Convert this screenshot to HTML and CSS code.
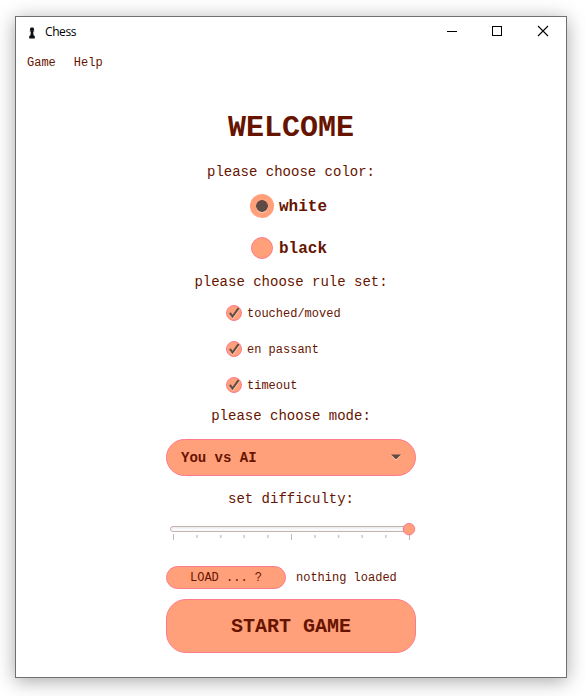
FILE: index.html
```html
<!DOCTYPE html>
<html lang="en">
<head>
<meta charset="utf-8">
<title>Chess</title>
<link rel="stylesheet" href="styles.css">
</head>
<body>
<div class="window">
  <header class="titlebar">
    <svg class="pawn" width="8" height="12" viewBox="0 0 8 12"><path d="M3 .5h2l1 1v1.200l-.8.8h1V4.500H5.200L5.500 8l1.300 1.300V11.500H1.200V9.300L2.500 8l.3-3.500H1.800V3.500h1L2 2.700V1.500z" fill="#111"/></svg>
    <span class="title">Chess</span>
    <div class="controls">
      <svg width="46" height="30"><path d="M18 14.5h10" stroke="#000"/></svg>
      <svg width="46" height="30"><rect x="17.5" y="9.5" width="9" height="9" fill="none" stroke="#000"/></svg>
      <svg width="45" height="30"><path d="M17 9l10 10M27 9L17 19" stroke="#000" stroke-width="1.1"/></svg>
    </div>
  </header>
  <nav class="menu"><span>Game</span><span>Help</span></nav>
  <main class="content">
    <h1>WELCOME</h1>
    <p class="label">please choose color:</p>
    <div class="radios">
      <label class="radio"><i class="dot selected"></i><span>white</span></label>
      <label class="radio"><i class="dot"></i><span>black</span></label>
    </div>
    <p class="label">please choose rule set:</p>
    <div class="checks">
      <label class="check"><i class="box"><svg width="14" height="14"><path d="M3.2 8.4L5.9 11.9 11.8 3.2" fill="none" stroke="#ffd0bc" stroke-width="1.6"/><path d="M2.900 6.900L5.500 10.600 11.600 2.200" fill="none" stroke="#5b4c47" stroke-width="2"/></svg></i><span>touched/moved</span></label>
      <label class="check"><i class="box"><svg width="14" height="14"><path d="M3.2 8.4L5.9 11.9 11.8 3.2" fill="none" stroke="#ffd0bc" stroke-width="1.6"/><path d="M2.900 6.900L5.500 10.600 11.600 2.200" fill="none" stroke="#5b4c47" stroke-width="2"/></svg></i><span>en passant</span></label>
      <label class="check"><i class="box"><svg width="14" height="14"><path d="M3.2 8.4L5.9 11.9 11.8 3.2" fill="none" stroke="#ffd0bc" stroke-width="1.6"/><path d="M2.900 6.900L5.500 10.600 11.600 2.200" fill="none" stroke="#5b4c47" stroke-width="2"/></svg></i><span>timeout</span></label>
    </div>
    <p class="label">please choose mode:</p>
    <div class="combo"><span>You vs AI</span><svg width="10" height="7"><path d="M0 1.5h10L5 6.5z" fill="#ffd0bc"/><path d="M0 .5h10L5.500 5h-1z" fill="#5f4a42"/></svg></div>
    <p class="label">set difficulty:</p>
    <svg class="slider" width="250" height="22" viewBox="0 0 250 22">
      <defs>
        <linearGradient id="track" x2="0" y2="1"><stop offset="0" stop-color="#e4e6e7"/><stop offset=".6" stop-color="#fafbfc"/><stop offset="1" stop-color="#f4f5f6"/></linearGradient>
      </defs>
      <rect x="4.5" y="6.5" width="241" height="5" rx="2.5" fill="url(#track)" stroke="#c8b2ae"/>
      <path d="M7.500 14v6M125.500 14v6M243.500 14v6" stroke="#c8b4b2"/>
      <path d="M31 15v3M54.700 15v3M78.200 15v3M101.800 15v3M149 15v3M172.600 15v3M196.200 15v3M219.800 15v3" stroke="#d5c7c5" stroke-width="1.6"/>
      <circle cx="243" cy="9.500" r="6.800" fill="#000" opacity=".06"/>
      <circle cx="243" cy="9" r="5.600" fill="#ffa07a" stroke="#ff7b8c"/>
    </svg>
    <div class="load"><button class="small">LOAD ... ?</button><span>nothing loaded</span></div>
    <button class="start">START GAME</button>
  </main>
</div>
</body>
</html>
```

FILE: styles.css
```css
* { box-sizing: border-box; }
body {
  margin: 0;
  height: 696px;
  padding: 16px 0 0 15px;
  overflow: hidden;
  background: #fff;
  color: #661400;
  font-family: "Liberation Mono", monospace;
}
.window {
  width: 552px;
  height: 662px;
  border: 1px solid #707070;
  background: #fff;
  box-shadow: 0 3px 18px rgba(0, 0, 0, .35);
}
.titlebar { display: flex; align-items: center; height: 30px; padding-left: 12px; color: #000; }
.pawn { margin-top: 2px; }
.title { margin-left: 9px; font: 12px/16px "Open Sans", sans-serif; letter-spacing: -.4px; }
.controls { display: flex; margin-left: auto; }
.controls svg { display: block; }
.menu { display: flex; gap: 18px; height: 30px; padding: 1px 0 0 11px; font-size: 12px; line-height: 30px; }
.content { display: flex; flex-direction: column; align-items: center; padding-top: 33px; }
h1 { margin: 0 0 16px; font-size: 30px; line-height: 36px; }
.label { margin: 0; font-size: 14px; line-height: 20px; }
.radios { margin: 11px 0; width: 82px; display: flex; flex-direction: column; gap: 16px; }
.radio { display: flex; align-items: center; height: 26px; font-size: 16px; font-weight: bold; gap: 5px; }
.radio span, .check span { padding-top: 2px; }
.dot { display: block; flex: none; width: 22px; height: 22px; margin: 0 1px; border: 1px solid #ff7b8c; border-radius: 50%; background: #ffa07a; }
.dot.selected { width: 24px; height: 24px; margin: 0; border: 0; background: radial-gradient(circle at 50% 50%, #5f4b45 5.500px, transparent 6.200px), radial-gradient(circle at 50% 54%, #ffd0bc 5.500px, #ffa07a 6.200px); }
.dot + span { margin-left: 0; }
.checks { margin: 13px 0; width: 130px; display: flex; flex-direction: column; gap: 20px; }
.check { display: flex; align-items: center; height: 16px; gap: 5px; font-size: 12px; }
.box { flex: none; width: 16px; height: 16px; border: 1px solid #ff7b8c; border-radius: 50%; background: #ffa07a; }
.box svg { display: block; }
.combo {
  display: flex; align-items: center; justify-content: space-between;
  width: 250px; height: 37px; margin: 13px 0;
  padding: 0 14px;
  border: 1px solid #ff7b8c; border-radius: 19px;
  background: #ffa07a;
  font-size: 14px; font-weight: bold;
}
.slider { display: block; margin: 11px 0 24px; }
.load { display: flex; align-items: center; width: 250px; height: 23px; gap: 10px; font-size: 12px; }
button { padding: 0; border: 1px solid #ff7b8c; background: #ffa07a; color: inherit; font-family: inherit; }
.small { width: 120px; height: 23px; border-radius: 12px; font-size: 12px; }
.start { width: 250px; height: 54px; margin-top: 10px; border-radius: 20px; font-size: 20px; font-weight: bold; }
```
